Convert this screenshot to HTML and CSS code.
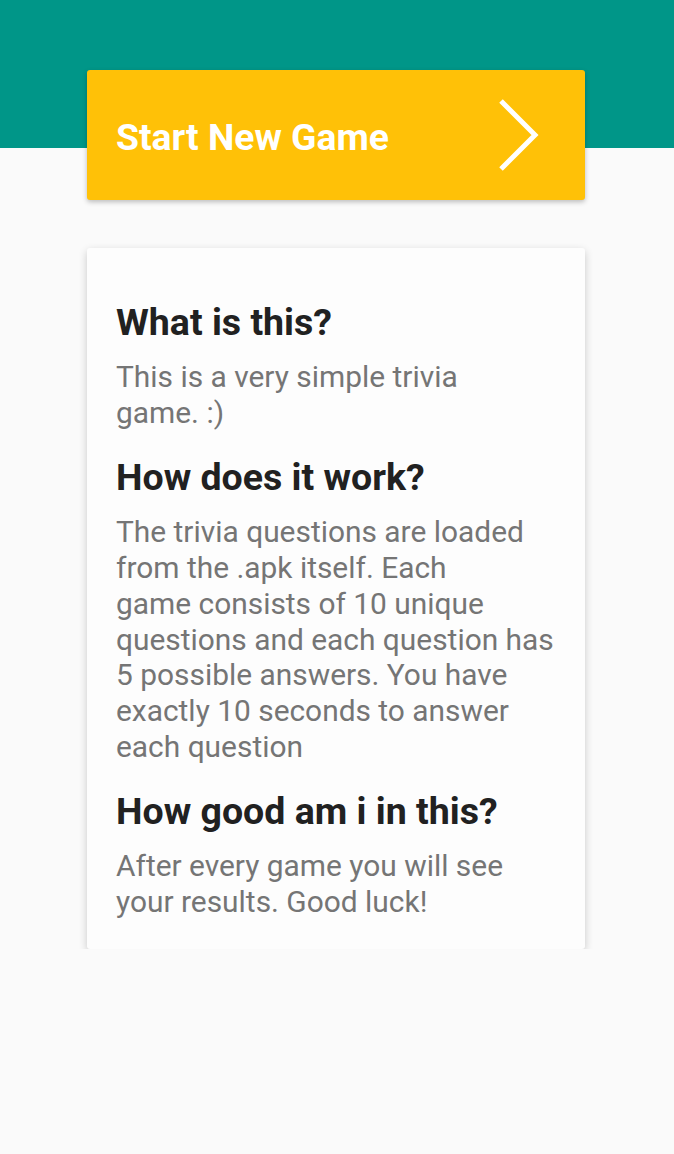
FILE: index.html
```html
<!DOCTYPE html>
<html>
<head>
<meta charset="utf-8">
<link rel="stylesheet" href="styles.css">
</head>
<body>
<div class="header"></div>
<main class="content">
  <button class="start">
    <span class="start-label">Start New Game</span>
    <svg class="chevron" width="44" height="74" viewBox="0 0 44 74"><polyline points="4,3 38,37 4,71" fill="none" stroke="#fff" stroke-width="5"/></svg>
  </button>
  <section class="card">
    <h2 class="title">What is this?</h2>
    <p class="text">This is a very simple trivia<br>game. :)</p>
    <h2 class="title">How does it work?</h2>
    <p class="text">The trivia questions are loaded<br>from the .apk itself. Each<br>game consists of 10 unique<br>questions and each question has<br>5 possible answers. You have<br>exactly 10 seconds to answer<br>each question</p>
    <h2 class="title">How good am i in this?</h2>
    <p class="text">After every game you will see<br>your results. Good luck!</p>
  </section>
</main>
</body>
</html>
```
FILE: styles.css
```css
html, body {
  margin: 0;
  padding: 0;
  background: #fafafa;
  font-family: Roboto, "Liberation Sans", sans-serif;
}
.header {
  height: 148px;
  background: #009688;
}
.content {
  margin-top: -78px;
  padding: 0 89px 0 87px;
  display: flex;
  flex-direction: column;
  gap: 48px;
}
.start {
  height: 130px;
  background: #ffc107;
  border: none;
  border-radius: 3px;
  box-shadow: 0 2px 5px rgba(0,0,0,0.25);
  display: flex;
  align-items: center;
  justify-content: space-between;
  padding: 0 44px 0 29px;
  font-family: inherit;
  cursor: pointer;
}
.start-label {
  color: #fff;
  font-weight: 700;
  font-size: 37.3px;
  line-height: 40px;
  margin-top: 4px;
}
.chevron { display: block; }
.card {
  background: #fdfdfd;
  border-radius: 3px;
  box-shadow: 0 3px 8px rgba(0,0,0,0.2);
  padding: 54px 29px 29px;
}
.title {
  margin: 27px 0 0;
  font-size: 37.5px;
  line-height: 40px;
  font-weight: 700;
  color: #212121;
}
.title:first-child { margin-top: 0; }
.text {
  margin: 17px 0 0;
  font-size: 29.9px;
  line-height: 35.7px;
  color: #757575;
  white-space: nowrap;
}
```
